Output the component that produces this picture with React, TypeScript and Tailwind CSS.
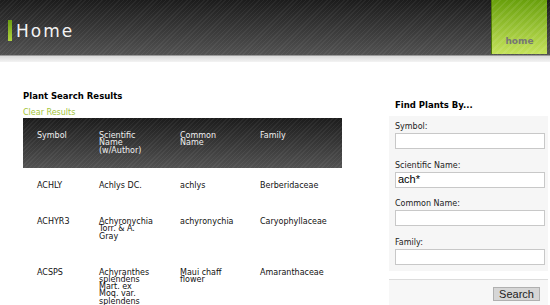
import React from 'react';

const rows = [
  { symbol: 'ACHLY', sci: 'Achlys DC.', common: 'achlys', family: 'Berberidaceae' },
  { symbol: 'ACHYR3', sci: 'Achyronychia Torr. & A. Gray', common: 'achyronychia', family: 'Caryophyllaceae' },
  { symbol: 'ACSPS', sci: 'Achyranthes splendens Mart. ex Moq. var. splendens', common: 'Maui chaff flower', family: 'Amaranthaceae' },
];

const fields = ['Symbol:', 'Scientific Name:', 'Common Name:', 'Family:'];

function Field({ label, value }: { label: string; value?: string }) {
  return (
    <div className="flex flex-col">
      <label className="text-[8px] leading-[8px] text-[#222] mb-[2px]">{label}</label>
      <input
        defaultValue={value}
        className="h-[16px] w-[150px] border border-[#c8c8c8] bg-white px-[2px] text-[11px] text-black font-['Liberation_Sans',sans-serif] outline-none"
      />
    </div>
  );
}

export default function App() {
  return (
    <div className="w-[550px] h-[305px] overflow-hidden bg-white font-['DejaVu_Sans',sans-serif]">
      {/* Header */}
      <div className="h-[55px] flex bg-[repeating-linear-gradient(135deg,rgba(255,255,255,0.05)_0px,rgba(255,255,255,0.05)_1px,transparent_1px,transparent_3px),linear-gradient(to_bottom,#1c1c1c,#525252)]">
        <div className="flex items-center gap-[4px] pl-[8px] pt-[20px] h-[41px]">
          <div className="w-[4px] h-[21px] bg-[linear-gradient(to_bottom,#6c9e12,#b2d440)]" />
          <span className="text-[17px] leading-[20px] tracking-[2px] text-[#f2f2f2]">Home</span>
        </div>
        <div className="ml-auto mr-[3px] w-[56px] h-[54px] border-l border-[#4f7a08] flex items-end justify-center pb-[8px] bg-[repeating-linear-gradient(135deg,rgba(255,255,255,0.08)_0px,rgba(255,255,255,0.08)_2px,transparent_2px,transparent_5px),linear-gradient(to_bottom,#69a00c,#c4e25a)]">
          <span className="text-[9px] leading-[9px] font-bold text-[#767676]">home</span>
        </div>
      </div>
      <div className="h-px bg-[#9a9a9a]" />
      <div className="h-[6px] bg-[linear-gradient(to_bottom,#dadada,#f3f3f3)]" />

      {/* Main */}
      <div className="flex">
        <div className="w-[342px] pl-[23px] pt-[29px]">
          <h2 className="text-[8.5px] leading-[10px] font-bold text-black">Plant Search Results</h2>
          <a className="block mt-[8px] text-[8px] leading-[8px] text-[#a2c43a]">Clear Results</a>
          <table className="mt-[1px] w-[319px] table-fixed border-collapse text-[8px] leading-[7.3px]">
            <colgroup>
              <col className="w-[62px]" />
              <col className="w-[81px]" />
              <col className="w-[80px]" />
              <col className="w-[96px]" />
            </colgroup>
            <thead>
              <tr className="h-[50px] text-[#f0f0f0] bg-[repeating-linear-gradient(135deg,rgba(255,255,255,0.05)_0px,rgba(255,255,255,0.05)_1px,transparent_1px,transparent_3px),linear-gradient(to_bottom,#1c1c1c,#525252)]">
                <th className="align-top text-left font-normal pt-[14px] pl-[14px] pr-[15px]">Symbol</th>
                <th className="align-top text-left font-normal pt-[14px] pl-[14px] pr-[15px]">Scientific Name (w/Author)</th>
                <th className="align-top text-left font-normal pt-[14px] pl-[14px] pr-[15px]">Common Name</th>
                <th className="align-top text-left font-normal pt-[14px] pl-[14px] pr-[15px]">Family</th>
              </tr>
            </thead>
            <tbody className="text-[#111]">
              {rows.map((r) => (
                <tr key={r.symbol}>
                  <td className="align-top pt-[14px] pb-[14.7px] pl-[14px] pr-[15px]">{r.symbol}</td>
                  <td className="align-top pt-[14px] pb-[14.7px] pl-[14px] pr-[15px]">{r.sci}</td>
                  <td className="align-top pt-[14px] pb-[14.7px] pl-[14px] pr-[15px]">{r.common}</td>
                  <td className="align-top pt-[14px] pb-[14.7px] pl-[14px] pr-[15px]">{r.family}</td>
                </tr>
              ))}
            </tbody>
          </table>
        </div>

        {/* Sidebar */}
        <div className="ml-[47px] w-[159px] pt-[38px]">
          <h3 className="pl-[6px] text-[8.5px] leading-[10px] font-bold text-black">Find Plants By...</h3>
          <div className="mt-[6px] bg-[#f6f6f6] pt-[7px] pb-[6px] px-[6px] flex flex-col gap-[12.5px]">
            {fields.map((f) => (
              <Field key={f} label={f} value={f === 'Scientific Name:' ? 'ach*' : undefined} />
            ))}
          </div>
          <div className="mt-[8px] border-t border-[#dcdcdc] bg-[#f7f7f7] pt-[7px] pr-[8px] pb-[10px] flex justify-end">
            <button className="h-[14px] w-[47px] bg-[#d6d6d6] border border-[#b0b0b0] text-[11px] leading-[12px] text-[#222] font-['Liberation_Sans',sans-serif]">
              Search
            </button>
          </div>
        </div>
      </div>
    </div>
  );
}
